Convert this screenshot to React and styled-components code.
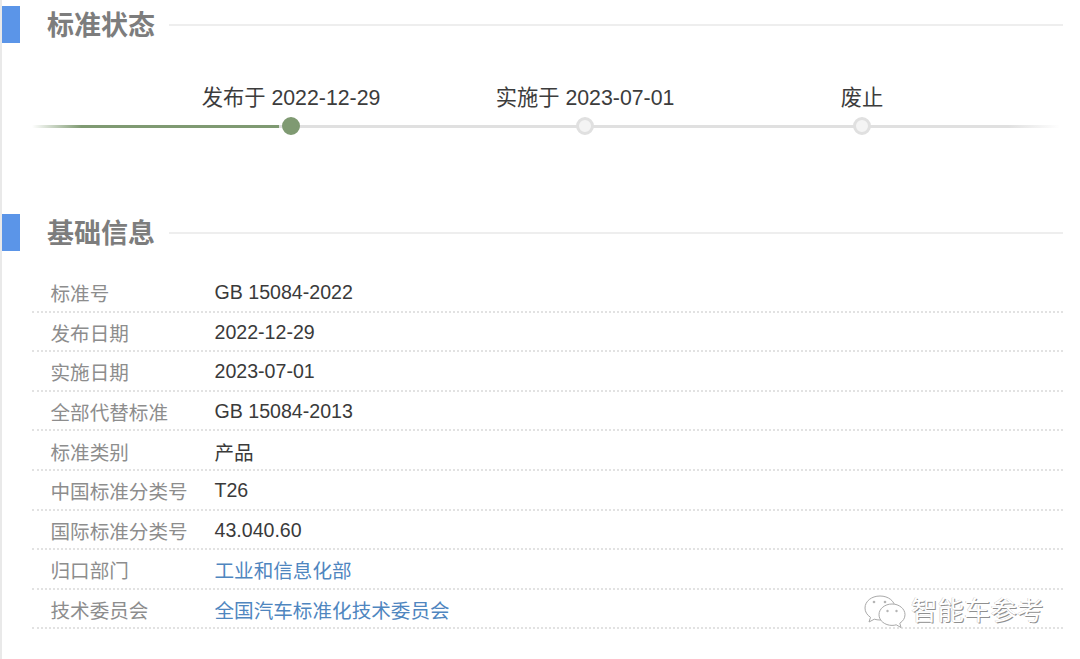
import React from 'react';
import styled, { createGlobalStyle } from 'styled-components';

const Global = createGlobalStyle`
  html, body {
    margin: 0;
    padding: 0;
    background: #fff;
  }
  body {
    font-family: "Liberation Sans", "Noto Sans CJK SC", sans-serif;
  }
`;

const Page = styled.div`
  position: relative;
  width: 1080px;
  height: 659px;
  box-sizing: border-box;
  border-left: 2px solid #e9e9e9;
  padding-top: 6px;
  overflow: hidden;
`;

const SectionHead = styled.div`
  display: flex;
  align-items: center;
  height: 37px;
  margin-top: ${p => p.$top || 0}px;
`;

const Marker = styled.div`
  width: 18px;
  height: 37px;
  background: #5b95e8;
`;

const HeadTitle = styled.h2`
  margin: 4px 14px 0 27px;
  font-size: 27px;
  line-height: 37px;
  font-weight: 700;
  color: #7d7d7d;
`;

const HeadLine = styled.div`
  width: 894px;
  height: 2px;
  margin-top: 1px;
  background: #eeeeee;
`;

const Timeline = styled.div`
  position: relative;
  display: flex;
  width: 1028px;
  height: 52px;
  margin: 40px 0 0 30px;
  padding-left: 159px;
  box-sizing: border-box;
`;

const Track = styled.div`
  position: absolute;
  left: 0;
  right: 0;
  bottom: 7.5px;
  height: 3px;
  background: linear-gradient(to right, #fff 0, #e0e0e0 5%, #e0e0e0 95%, #fff 100%);
`;

const Done = styled.div`
  position: absolute;
  left: 0;
  bottom: 7.5px;
  width: 247px;
  height: 3px;
  background: linear-gradient(to right, #fff 0, #7f9a72 20%);
`;

const Stop = styled.div`
  position: relative;
  width: 200px;
  margin-left: ${p => p.$gap || 0}px;
  display: flex;
  flex-direction: column;
  align-items: center;
`;

const StopLabel = styled.div`
  font-size: 21.3px;
  line-height: 30px;
  color: #3c3c3c;
  white-space: nowrap;
`;

const Dot = styled.div`
  width: 18px;
  height: 18px;
  margin-top: 4px;
  box-sizing: border-box;
  border-radius: 50%;
  background: ${p => (p.$active ? '#7f9a72' : '#f4f4f4')};
  border: 3px solid ${p => (p.$active ? '#7f9a72' : '#e0e0e0')};
`;

const InfoTable = styled.div`
  width: 1031px;
  margin: 22px 0 0 30px;
`;

const Row = styled.div`
  display: flex;
  align-items: center;
  height: 39.6px;
  box-sizing: border-box;
  padding: 2px 0 0 18.5px;
  border-bottom: 2px dotted #e2e2e2;
  font-size: 19.6px;
`;

const Label = styled.div`
  width: 164px;
  color: #8d8d8d;
  white-space: nowrap;
`;

const Value = styled.div`
  color: ${p => (p.$link ? '#4f86bf' : '#3a3a3a')};
  white-space: nowrap;
`;

const Watermark = styled.div`
  position: absolute;
  left: 861px;
  top: 593px;
  display: flex;
  align-items: center;
  gap: 3px;
`;

const WatermarkText = styled.span`
  font-size: 26.5px;
  line-height: 36px;
  color: #fff;
  text-shadow: 1px 1px 0 #8f8f8f, -0.5px -0.5px 0 #c9c9c9;
  white-space: nowrap;
`;

const WeChatMark = () => (
  <svg width="45" height="36" viewBox="0 0 45 36" fill="#fff" stroke="#a9a9a9" strokeWidth="1">
    <path d="M17 3C8.5 3 2 8.3 2 15c0 3.8 2 7 5.500 9.300L6 29l5.300-2.800c1.800.5 3.700.8 5.700.8 8.500 0 15-5.300 15-12S25.500 3 17 3z" />
    <path d="M29 11c-7.200 0-13 4.800-13 10.700S21.800 32.400 29 32.400c1.500 0 2.900-.2 4.200-.6L38 34.500l-1.200-4.300c3.200-2 5.200-5 5.200-8.500C42 15.800 36.200 11 29 11z" />
    <circle cx="11" cy="9" r="1.300" fill="#b5b5b5" stroke="none" />
    <circle cx="22" cy="9" r="1.300" fill="#b5b5b5" stroke="none" />
    <circle cx="24.500" cy="18" r="1.200" fill="#b5b5b5" stroke="none" />
    <circle cx="33.500" cy="18" r="1.200" fill="#b5b5b5" stroke="none" />
  </svg>
);

const stops = [
  { label: '发布于 2022-12-29', active: true, gap: 0 },
  { label: '实施于 2023-07-01', gap: 94 },
  { label: '废止', gap: 77 },
];

const rows = [
  ['标准号', 'GB 15084-2022'],
  ['发布日期', '2022-12-29'],
  ['实施日期', '2023-07-01'],
  ['全部代替标准', 'GB 15084-2013'],
  ['标准类别', '产品'],
  ['中国标准分类号', 'T26'],
  ['国际标准分类号', '43.040.60'],
  ['归口部门', '工业和信息化部', true],
  ['技术委员会', '全国汽车标准化技术委员会', true],
];

export default function App() {
  return (
    <Page>
      <Global />
      <SectionHead>
        <Marker />
        <HeadTitle>标准状态</HeadTitle>
        <HeadLine />
      </SectionHead>

      <Timeline>
        <Track />
        <Done />
        {stops.map(s => (
          <Stop key={s.label} $gap={s.gap}>
            <StopLabel>{s.label}</StopLabel>
            <Dot $active={s.active} />
          </Stop>
        ))}
      </Timeline>

      <SectionHead $top={79}>
        <Marker />
        <HeadTitle>基础信息</HeadTitle>
        <HeadLine />
      </SectionHead>

      <InfoTable>
        {rows.map(([label, value, link]) => (
          <Row key={label}>
            <Label>{label}</Label>
            <Value $link={link}>{value}</Value>
          </Row>
        ))}
      </InfoTable>

      <Watermark>
        <WeChatMark />
        <WatermarkText>智能车参考</WatermarkText>
      </Watermark>
    </Page>
  );
}
